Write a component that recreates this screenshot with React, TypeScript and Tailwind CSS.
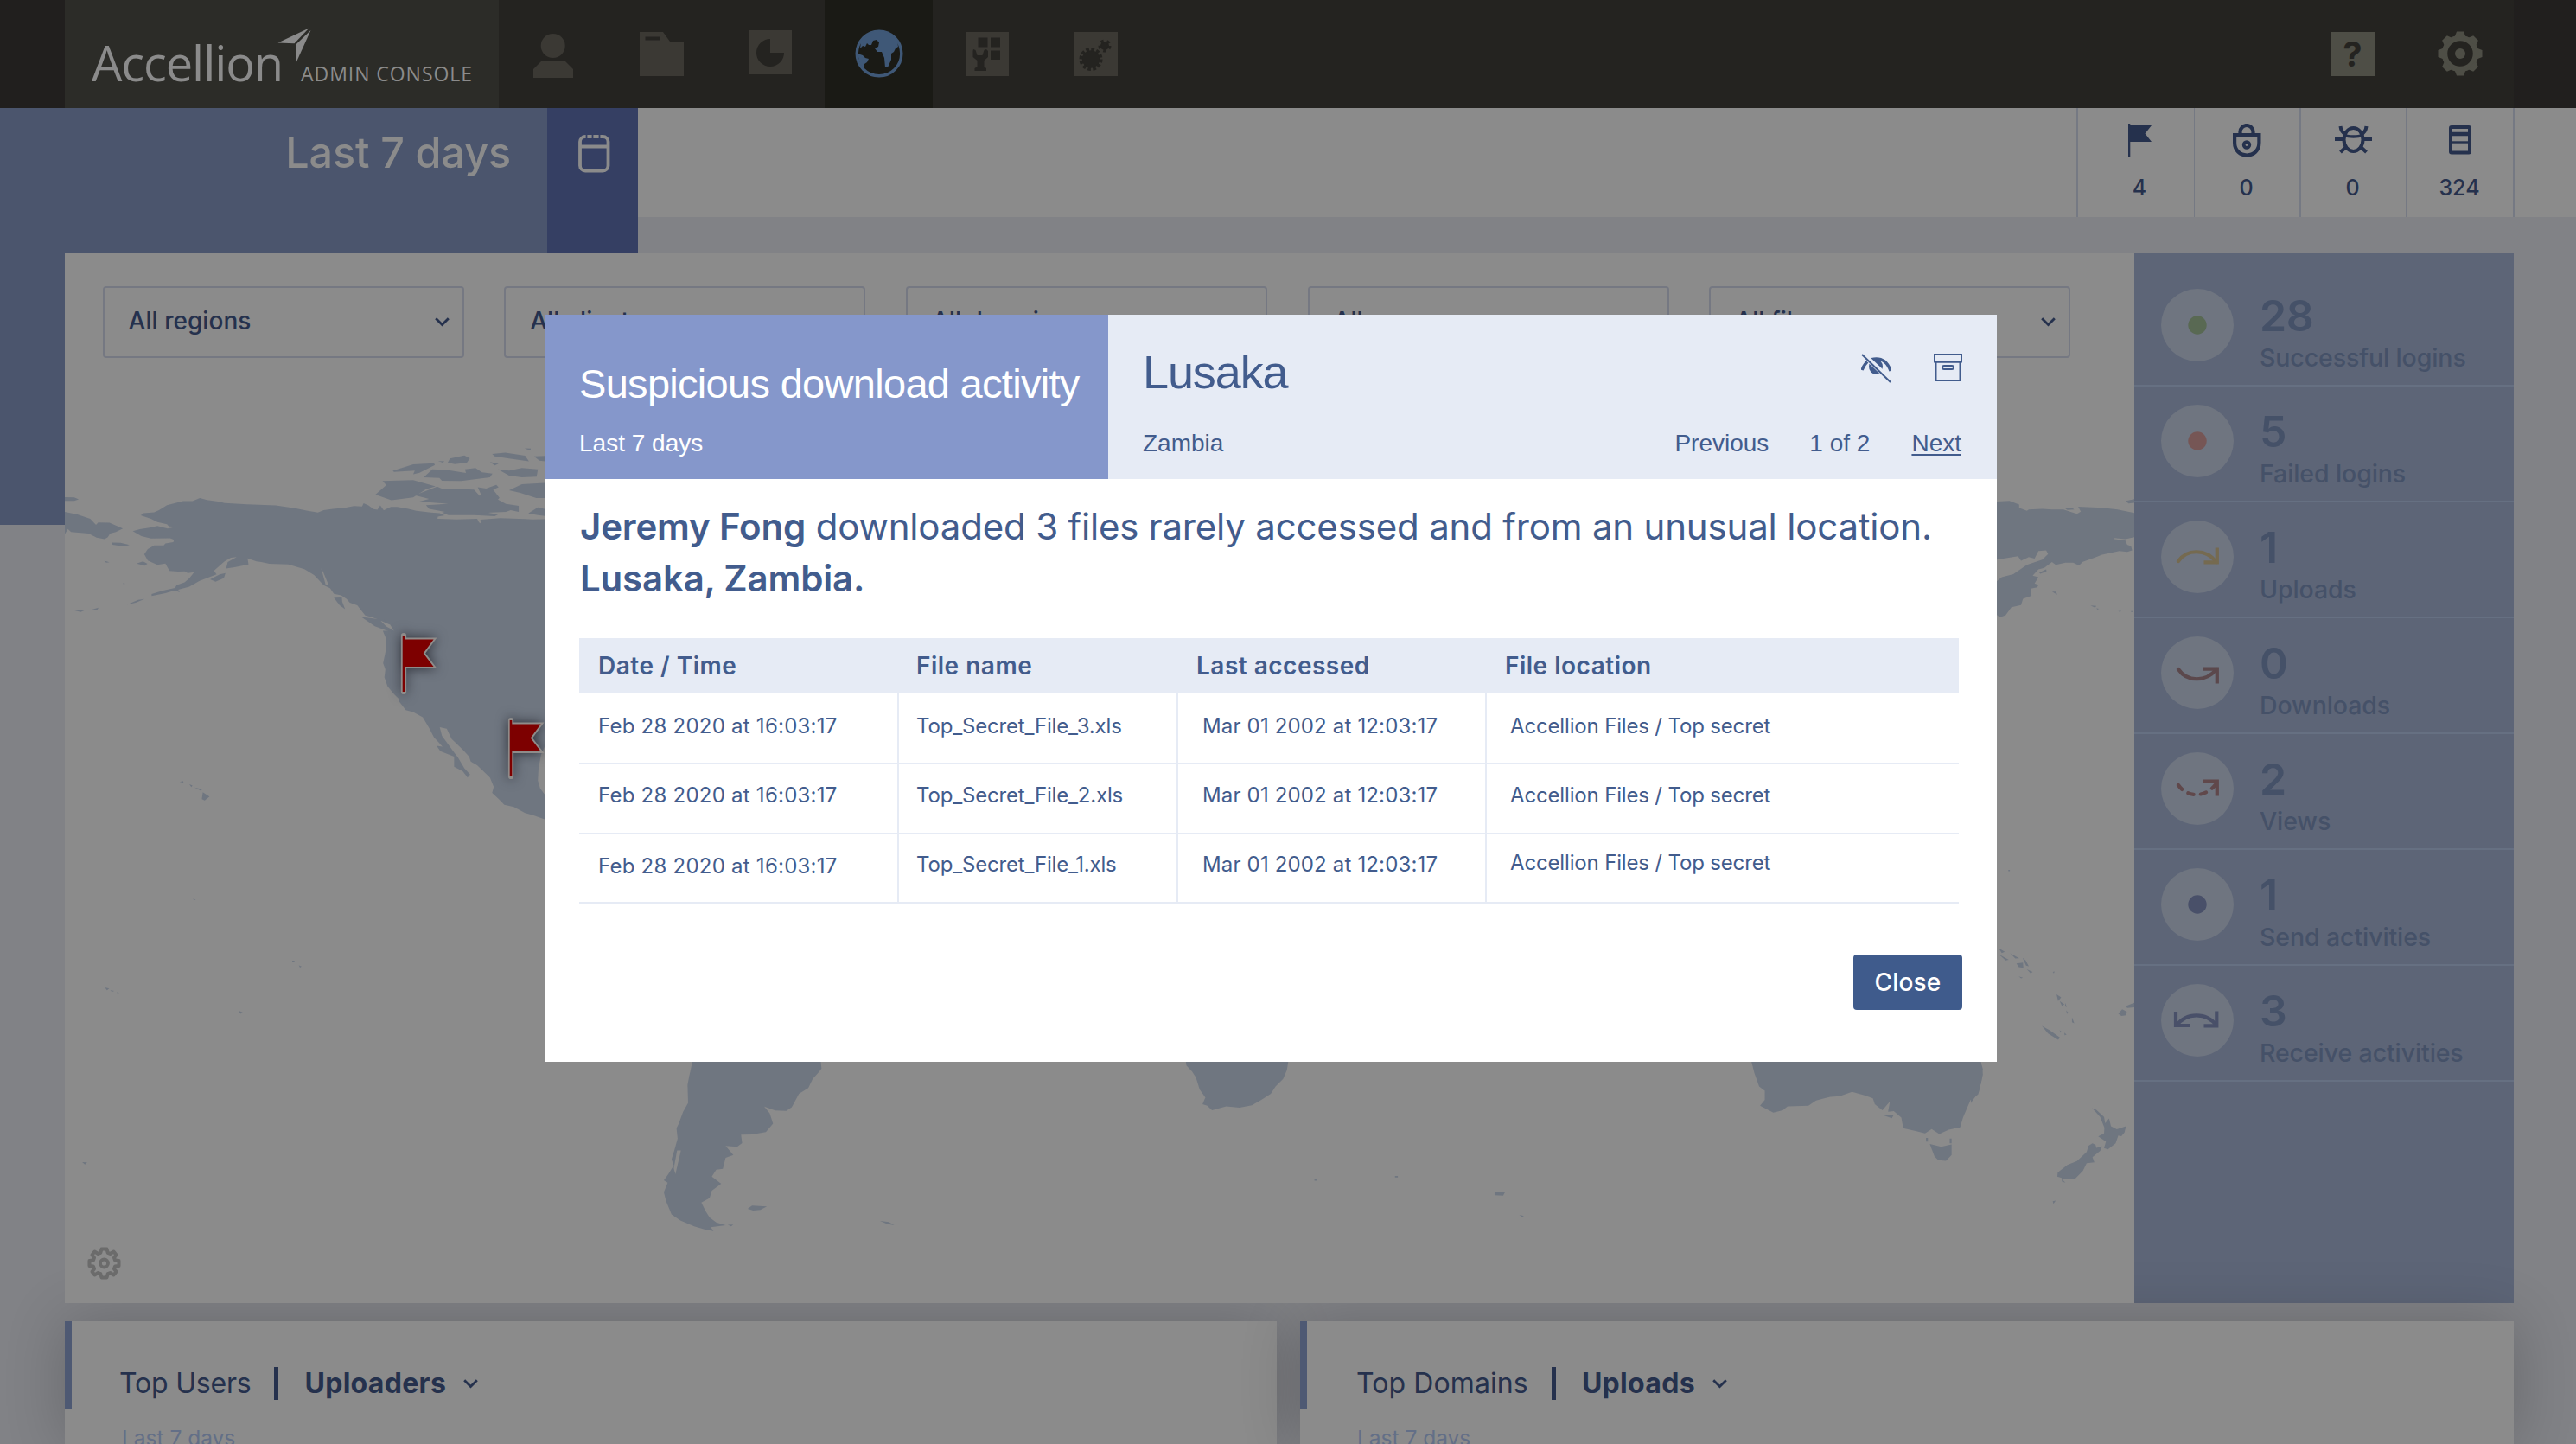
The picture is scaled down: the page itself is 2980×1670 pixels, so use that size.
import React from "react";

type P = { className?: string };

const LAND = "#6f7680";

/* ---------- header icons ---------- */

const UserIcon = () => (
  <svg width="46" height="51" viewBox="617 39 46 51" fill="#3b3934">
    <ellipse cx="639.7" cy="53" rx="14" ry="14" />
    <path d="M626 71H654L663 80V90H617V80Z" />
  </svg>
);

const FolderIcon = () => (
  <svg width="51" height="51" viewBox="0 0 51 51">
    <path d="M0 0H27L35 11H51V51H0Z" fill="#3b3934" />
    <rect x="6.5" y="5.5" width="17" height="4" fill="#242320" />
  </svg>
);

const PieIcon = () => (
  <svg width="50" height="51" viewBox="0 0 50 51">
    <rect width="50" height="51" fill="#3b3934" />
    <path d="M25 26H41A16 16 0 1 1 25 10Z" fill="#242320" />
  </svg>
);

const GlobeIcon = () => (
  <svg width="56" height="56" viewBox="0 0 56 56">
    <circle cx="28" cy="28" r="25.8" fill="#1a1a15" stroke="#3f5877" strokeWidth="3.4" />
    <path
      d="M10 10C16 4 22 1.500 28 1.500C36 1.500 44 6 49 13L50 20L47 22L45 26L42 28L42 35L38 44L35 44L34 33L31 26L26 26L23 22L27 20L28 15L25 12L21 13L19 18L16 18L14 16L12 20L9 19L6 22L7 14Z"
      fill="#3f5877"
    />
    <path d="M3 28L9 30L12 33L16 34L14 38L11 40L11 46L6 40Z" fill="#3f5877" />
  </svg>
);

const AppsIcon = () => (
  <svg width="50" height="51" viewBox="0 0 50 51">
    <rect width="50" height="51" fill="#3b3934" />
    <g fill="#242320">
      <rect x="14.500" y="6.500" width="11" height="11" />
      <rect x="29" y="6.500" width="11" height="11" />
      <rect x="29" y="21.500" width="11" height="10.500" />
      <path d="M9 20L11.500 21L13.500 27H19.500L21.500 21L24 20L26 22V29L21.500 33V40L24 42V45H10.500V42L13.500 40V33L8.500 29V22Z" />
    </g>
  </svg>
);

const GearsIcon = () => (
  <svg width="51" height="51" viewBox="0 0 51 51">
    <rect width="51" height="51" fill="#3b3934" />
    <circle cx="20" cy="31.500" r="10.300" fill="#242320" />
    <circle cx="20" cy="31.500" r="11.500" fill="none" stroke="#242320" strokeWidth="4" strokeDasharray="3.600 2.420" />
    <circle cx="36" cy="16" r="5" fill="#242320" />
    <circle cx="36" cy="16" r="5.500" fill="none" stroke="#242320" strokeWidth="4" strokeDasharray="3.200 3.710" />
  </svg>
);

const HeaderGear = () => (
  <svg width="52" height="52" viewBox="-26 -26 52 52">
    <circle r="18" fill="none" stroke="#4e4e46" strokeWidth="6.500" />
    {[0, 45, 90, 135, 180, 225, 270, 315].map((a) => (
      <path key={a} d="M-6.500 -19L-4 -25.500H4L6.500 -19Z" fill="#4e4e46" transform={`rotate(${a})`} />
    ))}
    <circle r="6" fill="#4e4e46" />
  </svg>
);

const LogoArrow = () => (
  <svg width="40" height="40" viewBox="320 32 40 40" fill="#8b8b8b">
    <path d="M321.500 49.500L357.500 32.500L340.500 50.300Z" />
    <path d="M359.500 35L342.300 51.500L343 71.500Z" />
  </svg>
);

const CalendarIcon = () => (
  <svg width="37" height="44" viewBox="0 0 37 44" fill="none" stroke="#8b8b8b">
    <rect x="2" y="2" width="32.500" height="39.500" rx="6" strokeWidth="3.800" />
    <path d="M2 13.500H34.500" strokeWidth="4.200" />
    <path d="M9.500 0V5M16.500 0V5M24.500 0V5" stroke="#353f63" strokeWidth="1.800" />
  </svg>
);

/* ---------- stat icons ---------- */

const FlagIcon = () => (
  <svg width="28" height="38" viewBox="0 0 28 38" fill="#25314d">
    <rect width="2.300" height="38" />
    <path d="M1 2H27L19.500 11.500L27 21H1Z" />
  </svg>
);

const LockIcon = () => (
  <svg width="33" height="39" viewBox="0 0 33 39" fill="none" stroke="#25314d" strokeWidth="4.200">
    <path d="M2.100 13H30.400V22C30.400 31 24 36.500 16.300 36.500C8.500 36.500 2.100 31 2.100 22Z" />
    <path d="M8.500 12V9.500A7.500 7.500 0 0 1 23.500 9.500V12" />
    <circle cx="16" cy="24.500" r="3.300" strokeWidth="3.800" />
  </svg>
);

const BugIcon = () => (
  <svg width="43" height="34" viewBox="0 0 43 34" fill="none" stroke="#25314d" strokeWidth="4">
    <ellipse cx="21.500" cy="16.500" rx="11" ry="13.500" />
    <path d="M11.500 11.500C16 13.500 27 13.500 31.500 11.500" strokeWidth="3.400" />
    <path d="M0 16H10M33 16H43M6.500 1C7 6 9 9 13 10.500M36.500 1C36 6 34 9 30 10.500M6.500 31L14 24M36.500 31L29 24" />
  </svg>
);

const BoxIcon = () => (
  <svg width="26" height="34" viewBox="0 0 26 34" fill="none" stroke="#25314d">
    <rect x="2" y="2" width="22" height="29.500" rx="1" strokeWidth="4" />
    <path d="M2 10H24" strokeWidth="4.500" />
    <path d="M2 19.500H24" strokeWidth="2.400" />
  </svg>
);

const Chevron = ({ className }: P) => (
  <svg className={className} width="17" height="11" viewBox="0 0 17 11" fill="none" stroke="#25314d" strokeWidth="2.800">
    <path d="M1.200 1.200L8.500 8.500L15.800 1.200" />
  </svg>
);

/* ---------- activity circle glyphs ---------- */

const Dot = ({ c }: { c: string }) => <circle r="10.700" fill={c} />;

const glyphs = {
  ok: <Dot c="#596953" />,
  fail: <Dot c="#765655" />,
  send: <Dot c="#495069" />,
  up: (
    <g fill="none" stroke="#756a50" strokeWidth="4.200">
      <path d="M-22 5C-12 -9.500 10 -9.500 22 6" strokeLinecap="round" />
      <path d="M22.800 -10.500V6.300H7.500" />
    </g>
  ),
  down: (
    <g fill="none" stroke="#5b484c" strokeWidth="4.200">
      <path d="M-22 -4C-12 11 10 11 22 -4" strokeLinecap="round" />
      <path d="M22.800 12.500V-4.300H6" />
    </g>
  ),
  view: (
    <g fill="none" stroke="#60484b" strokeWidth="4.200">
      <path d="M-22 -4C-12 11 10 11 22 -6" strokeLinecap="round" strokeDasharray="6.500 8.300" />
      <path d="M22.800 8.500V-8.300H6" />
    </g>
  ),
  recv: (
    <g fill="none" stroke="#495069" strokeWidth="4.200">
      <path d="M-24 6C-13 -9.500 11 -9.500 22 6" />
      <path d="M22.300 -10.500V6.300H7.500M-25 -10V6H-8.500" />
    </g>
  ),
};

const activities: [string, string, React.ReactNode][] = [
  ["28", "Successful logins", glyphs.ok],
  ["5", "Failed logins", glyphs.fail],
  ["1", "Uploads", glyphs.up],
  ["0", "Downloads", glyphs.down],
  ["2", "Views", glyphs.view],
  ["1", "Send activities", glyphs.send],
  ["3", "Receive activities", glyphs.recv],
];

/* ---------- world map ---------- */

const MapFlag = ({ x, y }: { x: number; y: number }) => (
  <g transform={`translate(${x} ${y})`} style={{ filter: "drop-shadow(0 0 7px rgba(20,22,30,.75))" }}>
    <path d="M1 1V66" stroke="#8f8c8a" strokeWidth="6.200" strokeLinecap="round" />
    <path d="M1 4.500H37.500L25 21.500L37.500 38H1Z" fill="#7d0000" stroke="#8f8c8a" strokeWidth="2" />
    <path d="M1 1V66" stroke="#7d0000" strokeWidth="2.600" />
  </g>
);

const WorldMap = () => (
  <svg className="block" width="2394" height="1214" viewBox="75 293 2394 1214" fill={LAND}>
    <g transform="translate(60 438.500) scale(.3699 .35714)">
      <path d="M1600 452L1503 454 1480 453 1402 450 1340 455 1343 468 1336 464 1330 452 1265 454 1206 452 1207 445 1228 441 1213 434 1185 432 1140 426 1115 420 1080 414 1060 414 1048 419 1038 425 1027 409 1018 423 1006 421 990 409 975 402 970 412 945 411 920 416 880 420 850 424 832 432 800 426 760 418 700 409 610 405 540 401 520 396 485 391 463 385 440 395 410 395 360 408 335 424 320 431 287 434 278 441 310 452 330 463 360 470 366 477 388 478 362 484 330 475 310 480 275 486 253 492 280 508 310 516 370 515 382 520 380 528 355 532 350 538 320 538 300 550 289 567 300 587 330 601 355 597 368 621 395 623 415 622 425 628 445 625 430 645 415 658 390 667 385 676 345 685 312 696 312 702 355 693 385 684 400 690 395 682 430 672 462 653 515 632 507 620 540 590 560 578 578 576 550 592 545 613 575 608 615 600 612 580 640 590 655 592 680 598 740 600 790 615 820 634 850 667 870 677 882 695 905 700 922 712 932 724 955 732 980 765 998 770 1040 785 1065 815 1035 815 1045 840 1046 870 1036 920 1043 940 1040 965 1050 995 1070 1020 1085 1035 1087 1045 1107 1072 1130 1078 1160 1095 1180 1130 1195 1160 1222 1190 1203 1187 1215 1205 1258 1222 1258 1255 1285 1270 1300 1290 1308 1280 1290 1260 1270 1225 1255 1205 1220 1155 1213 1127 1235 1132 1250 1165 1285 1200 1305 1222 1310 1238 1330 1250 1370 1290 1382 1320 1377 1340 1400 1362 1415 1378 1445 1385 1480 1405 1505 1412 1541 1425 1620 1440 1620 1400 1541 1345 1527 1325 1520 1300 1522 1260 1530 1215 1541 1190 1600 1180Z" />
      <path d="M882 708L907 707 908 720 917 745 900 732ZM968 770L1000 774 1040 780 1068 815 1058 818 1010 800ZM495 648L525 632 543 628 538 644 512 656ZM265 597L285 590 299 598 290 604ZM235 730L270 715 290 712 262 724ZM71 749H101L90 754ZM123 747L146 740 142 747ZM187 529L215 530 243 537 225 542 190 536ZM164 588L180 593 170 594Z" />
      <path d="M40 382L70 383 84 389 70 394 40 394ZM40 430L80 438 120 452 138 472 145 464 180 465 222 484 200 495 182 500 175 512 165 518 140 513 115 500 60 495 50 485 40 503Z" />
      <path d="M1034 330L1130 327 1200 347 1170 356 1130 383 1062 392 1012 374 1046 343Z" />
      <path d="M1135 376L1170 362 1205 348 1225 357 1300 357 1320 358 1338 378 1342 373 1332 350 1358 354 1390 342 1397 350 1380 358 1400 384 1395 390 1420 404 1460 410 1460 430 1435 424 1420 430 1370 432 1340 440 1240 440 1220 432 1230 430 1180 420 1170 408 1240 404 1150 396 1180 388Z" />
      <path d="M1066 297L1130 276 1195 272 1198 278 1150 303 1130 308 1135 296 1070 300ZM1163 318L1190 292 1240 295 1295 304 1292 292 1325 288 1345 302 1378 306 1370 318 1280 330 1220 329 1212 320ZM1238 270L1245 257 1290 247 1307 256 1298 270 1260 275ZM1377 242L1418 238 1480 248 1492 266 1430 257 1385 250ZM1395 292L1430 296 1470 288 1520 292 1516 316 1470 318 1430 312ZM1430 360L1470 340 1541 336 1600 340V385L1515 385 1465 368ZM1322 440L1360 432 1395 438 1385 444ZM1478 224L1498 225 1496 231ZM1508 250L1560 248V268L1525 264ZM1490 435L1520 415 1560 425V445L1520 440ZM1370 268L1397 274 1385 279ZM1208 265L1228 266 1222 270Z" />
      <path d="M472 1338L493 1352 478 1364 469 1360ZM400 1304L410 1301 412 1307ZM430 1312L440 1316 436 1321ZM446 1322L470 1328 466 1333ZM223 660L229 662 224 664Z" />
      <path d="M842 612L856 665 866 668 850 628ZM1028 782L1058 795 1070 815 1045 800Z" fill="#8b8b8b" />
    </g>

    <g transform="translate(2280 280) scale(.4464 .35714)">
      <path d="M0 830L67 840 100 838 125 850 125 860 145 870 150 866 185 864 210 866 240 866 262 875 275 880 285 873 278 857 340 860 380 866 426 878V955L400 962 372 958 372 962 400 966 405 980 415 985 418 998 405 1003 385 1000 340 1012 320 1022 290 1035 280 1047 265 1038 245 1038 220 1045 210 1036 190 1055 175 1060 160 1080 175 1085 165 1105 175 1110 172 1118 155 1122 157 1145 135 1155 130 1175 105 1182 90 1208 75 1215 60 1200V1105L80 1085 110 1075 145 1045 185 1028 200 1010 195 998 175 1000 165 1025 150 1020 130 1032 122 1017 67 1028 0 1050ZM243 861L262 860 268 866 250 867Z" />
      <path d="M402 838L426 832V844L408 846ZM177 1070L195 1060 196 1066 180 1074ZM210 1132L220 1132 224 1142ZM310 1177L325 1178 322 1184ZM325 1186L332 1187 328 1190ZM382 1195L390 1194 386 1198ZM415 1195H420V1198H415Z" />
    </g>

    <g transform="translate(2280 840) scale(.4464 .35714)">
      <path d="M0 1080H24L31 1110 27 1150 20 1185 5 1210 0 1220Z" />
      <path d="M314 1236L325 1242 345 1265 348 1285 358 1270 363 1295 378 1305 402 1295 398 1315 390 1327 382 1325 375 1350 355 1370 345 1366 350 1345 330 1328 345 1318 346 1300 335 1265Z" />
      <path d="M315 1350L323 1355 325 1365 340 1360 335 1375 315 1395 320 1412 300 1415 290 1440 270 1465 235 1466 245 1478 236 1474 235 1462 224 1458 225 1445 250 1420 275 1408 300 1378 305 1358Z" />
      <path d="M72 718L88 730 80 734ZM72 738L98 756 90 758ZM102 735L125 751 115 752ZM134 750L142 758 150 777 143 775ZM118 768L135 765 136 782 124 780ZM145 787L160 795 155 800ZM124 810L135 814 130 816ZM222 868L234 878 226 890ZM230 890L242 900 236 906ZM245 895L248 910 244 906ZM184 970L205 985 231 1008 226 1015 200 995ZM382 930L392 916 404 924 402 936 390 938ZM402 906L426 894V910L405 912ZM247 920L253 928 249 931ZM262 942L268 962 262 958ZM230 984L236 990 232 992ZM242 992L248 998 243 1000ZM212 1538L220 1536 214 1546ZM212 795L217 794 215 800ZM97 465H101V469H97Z" />
    </g>

    <g transform="translate(620 900) scale(1.0969 .34439)">
      <path d="M685 940L686 965 692 985 696 1005 700 1045 706 1072 703 1095 708 1100 713 1115 728 1102 742 1106 755 1098 765 1080 775 1060 780 1035 788 1010 792 980 794 940Z" />
      <path d="M1281 940L1285 990 1290 1035 1296 1050 1296 1080 1291 1100 1305 1123 1315 1115 1320 1102 1342 1100 1350 1082 1365 1070 1375 1068 1388 1053 1402 1066 1410 1075 1412 1095 1420 1115 1428 1085 1426 1120 1432 1118 1440 1140 1442 1175 1455 1185 1465 1193 1472 1178 1480 1195 1490 1180 1502 1172 1505 1140 1513 1080 1521 1062 1526 995 1523 940Z" />
      <path d="M1470 1228L1482 1238 1493 1230 1493 1265 1487 1285 1479 1283 1475 1270ZM1421 1132L1432 1130 1430 1142ZM1466 1208H1468V1220H1466ZM1491 1210H1493V1226H1491ZM1011 1388L1022 1390 1020 1402 1011 1400ZM1037 1466L1042 1470 1040 1473ZM821 1346H824V1352H821ZM906 1336H909V1341H906Z" />
    </g>

    <g transform="translate(60 900) scale(.6378 .34439)">
      <path d="M1163 940L1158 985 1156 1000 1153 1030 1154 1090 1145 1120 1137 1160 1133 1175 1135 1210 1129 1250 1124 1280 1128 1300 1118 1330 1110 1350 1117 1358 1110 1390 1114 1420 1124 1465 1140 1485 1165 1505 1185 1516 1200 1521 1195 1508 1222 1501 1205 1492 1193 1475 1186 1455 1178 1425 1193 1410 1197 1385 1214 1362 1197 1338 1205 1315 1217 1312 1222 1275 1236 1265 1222 1235 1243 1238 1252 1225 1250 1197 1270 1196 1295 1188 1308 1160 1302 1125 1292 1103 1312 1116 1332 1117 1342 1105 1355 1060 1372 1040 1380 1010 1392 985 1396 975 1394 940Z" />
      <path d="M1134 1250L1141 1250 1136 1290 1131 1330 1128 1310Z" fill="#8b8b8b" />
      <path d="M1262 1446L1270 1435 1297 1438 1285 1450 1272 1452ZM1502 1487L1518 1490 1528 1501 1515 1497ZM96 703L104 706 100 712ZM106 712L113 714 109 717ZM118 718L122 721 119 722ZM339 781L346 786 342 791ZM55 1289L64 1290 60 1297ZM256 405L261 408 258 410ZM436 613H440V616H436ZM448 629L453 632 450 636ZM71 851H74V854H71ZM1226 1500L1236 1499 1232 1505Z" />
    </g>

    <MapFlag x={466} y={734} />
    <MapFlag x={590} y={832} />

    <g fill="none" stroke="#6b6b6b" transform="translate(120.500 1461)">
      <circle r="4.500" strokeWidth="3.800" />
      <path
        strokeWidth="4"
        strokeLinejoin="round"
        d="M-3 -16.500H3L4.200 -12.200L7 -11L11 -13.500L14 -9.800L11.500 -6.500L12.600 -3.500L17 -3V3L12.600 3.500L11.500 6.500L14 9.800L11 13.500L7 11L4.200 12.200L3 16.500H-3L-4.200 12.200L-7 11L-11 13.500L-14 9.800L-11.500 6.500L-12.600 3.500L-17 3V-3L-12.600 -3.500L-11.500 -6.500L-14 -9.800L-11 -13.500L-7 -11L-4.200 -12.200Z"
      />
    </g>
  </svg>
);

/* ---------- page ---------- */

const Header = () => (
  <header className="flex h-[125px] bg-[#211f1e]">
    <div className="ml-[75px] flex w-[502px] bg-[#2c2c28] pl-[31px] text-[#8b8b8b] font-['Open_Sans']">
      <span className="mt-[32px] w-[222px] whitespace-nowrap text-[56px] leading-[80px] font-medium tracking-[-1.100px]">Accellion</span>
      <span className="mt-[32px] ml-[-8px]">
        <LogoArrow />
      </span>
      <span className="mt-[69px] ml-[-12px] whitespace-nowrap text-[23px] leading-[32px] font-medium tracking-[0.950px]">ADMIN CONSOLE</span>
    </div>
    <nav className="flex w-[2331px] bg-[#242320]">
      <div className="w-[125px] pt-[39px] pl-[40px]"><UserIcon /></div>
      <div className="w-[126px] pt-[37px] pl-[38px]"><FolderIcon /></div>
      <div className="w-[126px] pt-[35px] pl-[38px]"><PieIcon /></div>
      <div className="w-[125px] bg-[#1a1a15] pt-[34px] pl-[35px]"><GlobeIcon /></div>
      <div className="w-[126px] pt-[37px] pl-[38px]"><AppsIcon /></div>
      <div className="w-[126px] pt-[37px] pl-[37px]"><GearsIcon /></div>
      <div className="mt-[37px] ml-auto flex h-[51px] w-[51px] items-center justify-center bg-[#4e4e46] text-[40px] font-bold leading-none text-[#242320]">?</div>
      <div className="mt-[36px] mr-[36px] ml-[73px]"><HeaderGear /></div>
    </nav>
  </header>
);

const Stat = ({ icon, n, className }: { icon: React.ReactNode; n: string; className: string }) => (
  <div className={`flex flex-col items-center border-[#757983] ${className}`}>
    <div className="flex h-[40px] items-center">{icon}</div>
    <span className="mt-[18px] mr-[2px] text-[25px] leading-[34px] font-medium text-[#25314d]">{n}</span>
  </div>
);

const Select = ({ label }: { label: string }) => (
  <div className="flex h-[83px] w-[418px] justify-between rounded-[4px] border-2 border-[#757882] pt-[21px] pr-[15px] pl-[28px] text-[#25314d]">
    <span className="text-[28px] leading-[34px] font-medium tracking-[0.050px]">{label}</span>
    <Chevron className="mt-[13px]" />
  </div>
);

const Card = ({ title, metric, className, gap }: { title: React.ReactNode; metric: string; className: string; gap: string }) => (
  <div className={`flex h-[142px] bg-[#8b8b8b] shadow-[0_0_70px_rgba(0,0,0,0.2)] ${className}`}>
    <div className="h-[102px] w-[8px] bg-[#4e5973]" />
    <div className="pl-[55px] text-[#25314d]">
      <div className="mt-[52px] flex items-center whitespace-nowrap text-[32px] leading-[40px]">
        {title}
        <span className={`h-[38px] w-[5px] bg-[#25314d] ${gap}`} />
        <b className="ml-[30px] font-bold tracking-[0.300px]">{metric}</b>
        <Chevron className="ml-[20px]" />
      </div>
      <div className="mt-[28px] ml-[3px] text-[24.500px] leading-[30px] text-[#636f87]">Last 7 days</div>
    </div>
  </div>
);

const rows = [
  { f: "Top_Secret_File_3.xls", h: "h-[82px]", p: ["pt-[23px]", "pt-[23px]", "pt-[23px]", "pt-[23px]"] },
  { f: "Top_Secret_File_2.xls", h: "h-[81px]", p: ["pt-[21px]", "pt-[21px]", "pt-[21px]", "pt-[21px]"] },
  { f: "Top_Secret_File_1.xls", h: "h-[80px]", p: ["pt-[22px]", "pt-[20px]", "pt-[20px]", "pt-[18px]"] },
];

const Modal = () => (
  <div className="absolute top-[364px] left-[630px] h-[864px] w-[1680px] bg-white text-[#425c8d]">
    <div className="flex h-[190px] font-['Liberation_Sans']">
      <div className="w-[652px] bg-[#8597cb] pl-[40px] text-white">
        <div className="mt-[50px] whitespace-nowrap text-[47px] leading-[60px] tracking-[-0.700px]">Suspicious download activity</div>
        <div className="mt-[22px] text-[28px] leading-[34px]">Last 7 days</div>
      </div>
      <div className="flex flex-1 flex-col bg-[#e6ebf5] pr-[41px] pl-[40px]">
        <div className="flex h-[132px] justify-between">
          <span className="mt-[36px] text-[54px] leading-[60px] tracking-[-1.100px]">Lusaka</span>
          <div className="mt-[45px] mr-[-1px] flex gap-[49px]">
            <svg width="35" height="34" viewBox="0 0 35 34">
              <path d="M1 19C5 8 12 6 17.500 6C23 6 30 8 34 20" fill="none" stroke="#425c8d" strokeWidth="3.400" />
              <ellipse cx="17" cy="15" rx="8" ry="9" fill="#425c8d" />
              <path d="M1.500 0L35 31.500" stroke="#e6ebf5" strokeWidth="6" />
              <path d="M1 1L34 33" stroke="#425c8d" strokeWidth="2" />
            </svg>
            <svg width="33" height="33" viewBox="0 0 33 33" fill="none" stroke="#425c8d" strokeWidth="2">
              <rect x="1" y="1" width="31" height="8.500" />
              <rect x="2.500" y="9.500" width="28" height="21.500" />
              <rect x="10" y="14" width="13" height="4" rx="2" />
            </svg>
          </div>
        </div>
        <div className="flex whitespace-nowrap text-[28px] leading-[34px]">
          <span>Zambia</span>
          <span className="ml-auto">Previous</span>
          <span className="ml-[47px]">1 of 2</span>
          <span className="ml-[48px] underline decoration-2 underline-offset-[3px]">Next</span>
        </div>
      </div>
    </div>

    <p className="mt-[25px] pl-[41px] whitespace-nowrap text-[42px] leading-[60px] tracking-[-0.180px]">
      <b className="font-semibold">Jeremy Fong</b> downloaded 3 files rarely accessed and from an unusual location.
      <br />
      <b className="font-semibold">Lusaka, Zambia.</b>
    </p>

    <div className="mt-[39px] ml-[40px] w-[1596px]">
      <div className="flex h-[64px] bg-[#e6ebf5] pt-[15px] text-[28px] leading-[34px] font-semibold tracking-[0.500px]">
        <span className="w-[368px] pl-[22px]">Date / Time</span>
        <span className="w-[324px] pl-[22px]">File name</span>
        <span className="w-[356px] pl-[22px]">Last accessed</span>
        <span className="pl-[23px]">File location</span>
      </div>
      {rows.map((r) => (
        <div key={r.f} className={`flex border-b-2 border-[#e6ebf5] text-[24px] leading-[30px] ${r.h}`}>
          <span className={`w-[368px] pl-[22px] tracking-[0.240px] ${r.p[0]}`}>Feb 28 2020 at 16:03:17</span>
          <span className={`w-[323px] border-l-2 border-[#e6ebf5] pl-[20px] tracking-[-0.180px] ${r.p[1]}`}>{r.f}</span>
          <span className={`w-[357px] border-l-2 border-[#e6ebf5] pl-[28px] tracking-[0.160px] ${r.p[2]}`}>Mar 01 2002 at 12:03:17</span>
          <span className={`border-l-2 border-[#e6ebf5] pl-[27px] tracking-[-0.160px] ${r.p[3]}`}>Accellion Files / Top secret</span>
        </div>
      ))}
    </div>

    <button className="mt-[59px] mr-[40px] ml-auto flex h-[64px] w-[126px] items-center justify-center rounded-[4px] bg-[#3f5b8c] text-[28px] font-medium tracking-[0.200px] text-white">
      Close
    </button>
  </div>
);

export default function App() {
  return (
    <div className="relative h-[1670px] w-[2980px] overflow-hidden bg-[#818286] font-['Inter',sans-serif]">
      <Header />
      <div className="flex">
        <div className="h-[482px] w-[75px] shrink-0 bg-[#4b556d]" />
        <div className="flex w-[2905px] flex-col">
          <div className="flex h-[168px]">
            <div className="w-[558px] bg-[#4b556d] pt-[22px] pr-[42px] text-right text-[48.500px] leading-[60px] font-medium tracking-[-0.100px] text-[#8b8b8b]">
              Last 7 days
            </div>
            <div className="w-[105px] bg-[#353f63] pt-[31px] pl-[36px]"><CalendarIcon /></div>
            <div className="flex h-[126px] flex-1 justify-end bg-[#8b8b8b] pr-[71px]">
              <Stat className="w-[136px] border-l-2 pt-[17px] pl-[10px]" icon={<FlagIcon />} n="4" />
              <Stat className="w-[122px] border-l pt-[17px]" icon={<LockIcon />} n="0" />
              <Stat className="w-[123px] border-l-2 pt-[17px]" icon={<BugIcon />} n="0" />
              <Stat className="w-[126px] border-x-2 pt-[17px]" icon={<BoxIcon />} n="324" />
            </div>
          </div>
          <div className="flex h-[1214px] w-[2833px]">
            <div className="relative w-[2394px] bg-[#8b8b8b]">
              <WorldMap />
              <div className="absolute top-[38px] left-[43.500px] flex gap-[46.700px]">
                <Select label="All regions" />
                <Select label="All clients" />
                <Select label="All domains" />
                <Select label="All users" />
                <Select label="All files" />
              </div>
            </div>
            <div className="flex-1 bg-[#5d6577] pt-[20px]">
              {activities.map(([n, label, g]) => (
                <div key={label} className="flex h-[134px] border-b-2 border-[#667082] pt-[21px] pl-[31px] text-[#455168]">
                  <svg className="shrink-0" width="84" height="84" viewBox="-42 -42 84 84">
                    <circle r="42" fill="#6f7580" />
                    {g}
                  </svg>
                  <div className="ml-[30px] whitespace-nowrap">
                    <div className="mt-[1px] text-[50px] leading-[60px] font-semibold tracking-[-0.500px]">{n}</div>
                    <div className="mt-[2px] text-[28.500px] leading-[34px] font-medium tracking-[-0.100px]">{label}</div>
                  </div>
                </div>
              ))}
            </div>
          </div>
          <div className="mt-[21px] flex w-[2833px] justify-between">
            <Card
              title={<span className="tracking-[-0.200px]">Top Users</span>}
              gap="ml-[27px]"
              metric="Uploaders"
              className="w-[1402px]"
            />
            <Card
              title={<span className="ml-[2px] tracking-[0.100px]">Top Domains</span>}
              gap="ml-[27px]"
              metric="Uploads"
              className="w-[1404px]"
            />
          </div>
        </div>
      </div>
      <Modal />
    </div>
  );
}
